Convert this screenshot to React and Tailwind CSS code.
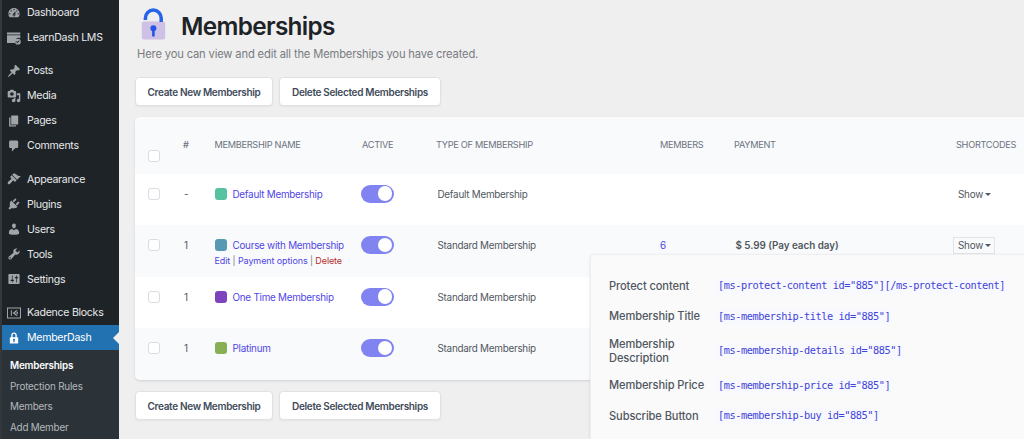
import React from "react";
import clsx from "clsx";

// --- Menu icons, 20x20 grid ---
const ICONS = {
  dashboard:
    "M3.76 16h12.48c1.1-1.37 1.76-3.11 1.76-5 0-4.42-3.58-8-8-8s-8 3.58-8 8c0 1.89.66 3.63 1.76 5zM10 4c.55 0 1 .45 1 1s-.45 1-1 1-1-.45-1-1 .45-1 1-1zM6 6c.55 0 1 .45 1 1s-.45 1-1 1-1-.45-1-1 .45-1 1-1zm8 0c.55 0 1 .45 1 1s-.45 1-1 1-1-.45-1-1 .45-1 1-1zm-5.37 5.55L12 7v6c0 1.1-.9 2-2 2s-2-.9-2-2c0-.57.24-1.08.63-1.45zM4 10c.55 0 1 .45 1 1s-.45 1-1 1-1-.45-1-1 .45-1 1-1zm12 0c.55 0 1 .45 1 1s-.45 1-1 1-1-.45-1-1 .45-1 1-1zm-5 3c0-.55-.45-1-1-1s-1 .45-1 1 .45 1 1 1 1-.45 1-1z",
  learndash:
    "M0 2h19v3H0zM0 6h19v4.5a5 5 0 0 0-7 6.5H0zM15.5 11a4.2 4.2 0 1 0 0 8.4 4.2 4.2 0 0 0 0-8.4zm-.7 6.4l-2-2 .9-.9 1.1 1.1 2.3-2.3.9.9z",
  post: "M10.44 3.02l1.82-1.82 6.36 6.35-1.83 1.82c-1.05-.68-2.48-.57-3.41.36l-.75.75c-.92.93-1.04 2.35-.35 3.41l-1.83 1.82-2.41-2.41-2.8 2.79c-.42.42-3.38 2.71-3.8 2.29s1.86-3.39 2.28-3.81l2.79-2.79L4.1 9.36l1.83-1.82c1.05.69 2.48.57 3.4-.36l.75-.75c.93-.92 1.05-2.35.36-3.41z",
  media:
    "M13 11V4c0-.55-.45-1-1-1h-1.67L9 1H5L3.67 3H2c-.55 0-1 .45-1 1v7c0 .55.45 1 1 1h10c.55 0 1-.45 1-1zM7 4.5c1.38 0 2.5 1.12 2.5 2.5S8.38 9.5 7 9.5 4.5 8.38 4.5 7 5.62 4.5 7 4.5zM14 6h5v10.5c0 1.38-1.12 2.5-2.5 2.5S14 17.88 14 16.5s1.12-2.5 2.5-2.5c.17 0 .34.02.5.05V9h-3V6zm-4 8.05V13h2v3.5c0 1.38-1.12 2.5-2.5 2.5S7 17.88 7 16.5 8.12 14 9.5 14c.17 0 .34.02.5.05z",
  page: "M6 15V2h10v13H6zm-1 1h8v2H3V5h2v11z",
  comments:
    "M5 2h9c1.1 0 2 .9 2 2v7c0 1.1-.9 2-2 2h-2l-5 5v-5H5c-1.1 0-2-.9-2-2V4c0-1.1.9-2 2-2z",
  appearance:
    "M14.48 11.06L7.41 3.99l1.5-1.5c.5-.56 2.3-.47 3.51.32 1.21.8 1.43 1.28 2.91 2.1 1.18.64 2.45 1.26 4.45.85zm-.71.71L6.7 4.7 4.93 6.47c-.39.39-.39 1.02 0 1.41l1.06 1.06c.39.39.39 1.03 0 1.42-.6.6-1.43 1.11-2.21 1.69-.35.26-.7.53-1.01.84C1.43 14.23.4 16.08 1.4 17.07c.99 1 2.84-.03 4.18-1.36.31-.31.58-.66.85-1.02.57-.78 1.08-1.61 1.69-2.21.39-.39 1.02-.39 1.41 0l1.06 1.06c.39.39 1.02.39 1.41 0z",
  plugins:
    "M13.11 4.36L9.87 7.6 8 5.73l3.24-3.24c.35-.34 1.05-.2 1.56.32.52.51.66 1.21.31 1.55zm-8 1.77l.91-1.12 9.01 9.01-1.19.84c-.71.71-2.63 1.16-3.82 1.16H6.14L4.9 17.26c-.59.59-1.54.59-2.12 0-.59-.58-.59-1.53 0-2.12l1.24-1.24v-3.88c0-1.13.4-3.19 1.09-3.89zm7.26 3.97l3.24-3.24c.34-.35 1.04-.21 1.55.31.52.51.66 1.21.31 1.55l-3.24 3.25z",
  users:
    "M10 9.25c-2.27 0-2.73-3.44-2.73-3.44C7 4.02 7.82 2 9.97 2c2.16 0 2.98 2.02 2.71 3.81 0 0-.41 3.44-2.68 3.44zm0 2.57L12.72 10c2.39 0 4.52 2.33 4.52 4.53v2.49s-3.65 1.13-7.24 1.13c-3.65 0-7.24-1.13-7.24-1.13v-2.49c0-2.25 1.94-4.48 4.47-4.48z",
  tools:
    "M16.68 9.77c-1.34 1.34-3.3 1.67-4.95.99l-5.41 6.52c-.99.99-2.59.99-3.58 0s-.99-2.59 0-3.57l6.52-5.42c-.68-1.65-.35-3.61.99-4.95 1.28-1.28 3.12-1.62 4.72-1.06l-2.89 2.89 2.82 2.82 2.86-2.87c.53 1.58.18 3.39-1.08 4.65zM3.81 16.21c.4.39 1.04.39 1.43 0 .4-.4.4-1.04 0-1.43-.39-.4-1.03-.4-1.43 0-.39.39-.39 1.03 0 1.43z",
  settings:
    "M18 16V4c0-.55-.45-1-1-1H3c-.55 0-1 .45-1 1v12c0 .55.45 1 1 1h14c.55 0 1-.45 1-1zM8 11h1c.55 0 1 .45 1 1s-.45 1-1 1H8v1.5c0 .28-.22.5-.5.5s-.5-.22-.5-.5V13H6c-.55 0-1-.45-1-1s.45-1 1-1h1V5.5c0-.28.22-.5.5-.5s.5.22.5.5V11zm5-2h-1c-.55 0-1-.45-1-1s.45-1 1-1h1V5.5c0-.28.22-.5.5-.5s.5.22.5.5V7h1c.55 0 1 .45 1 1s-.45 1-1 1h-1v5.5c0 .28-.22.5-.5.5s-.5-.22-.5-.5V9z",
  kadence:
    "M0 2h20v16H0zM1.4 3.4v13.2h17.2V3.4zM5.5 6H7v8H5.5zM8 10l5-4h2.5l-4.2 4 4.2 4H13zM12.6 10l2.9-2.2v4.4z",
  lock: "M14 9h1c.55 0 1 .45 1 1v7c0 .55-.45 1-1 1H5c-.55 0-1-.45-1-1v-7c0-.55.45-1 1-1h1V6c0-2.21 1.79-4 4-4s4 1.79 4 4v3zm-2 0V6c0-1.1-.9-2-2-2s-2 .9-2 2v3h4zm-1 7l-.36-2.15c.51-.24.86-.75.86-1.35 0-.83-.67-1.5-1.5-1.5s-1.5.67-1.5 1.5c0 .6.35 1.11.86 1.35L9 16h2z",
};

const MENU = [
  [
    { icon: "dashboard", label: "Dashboard" },
    { icon: "learndash", label: "LearnDash LMS" },
  ],
  [
    { icon: "post", label: "Posts" },
    { icon: "media", label: "Media" },
    { icon: "page", label: "Pages" },
    { icon: "comments", label: "Comments" },
  ],
  [
    { icon: "appearance", label: "Appearance" },
    { icon: "plugins", label: "Plugins" },
    { icon: "users", label: "Users" },
    { icon: "tools", label: "Tools" },
    { icon: "settings", label: "Settings" },
  ],
  [
    { icon: "kadence", label: "Kadence Blocks" },
    { icon: "lock", label: "MemberDash", active: true },
  ],
];

const SUBMENU = ["Memberships", "Protection Rules", "Members", "Add Member"];

const ROWS = [
  { num: "-", color: "bg-[#57c2a0]", name: "Default Membership", type: "Default Membership", show: true },
  {
    num: "1",
    color: "bg-[#5799b4]",
    name: "Course with Membership",
    type: "Standard Membership",
    members: "6",
    payment: "$ 5.99 (Pay each day)",
    show: true,
    open: true,
  },
  { num: "1", color: "bg-[#7d44bd]", name: "One Time Membership", type: "Standard Membership" },
  { num: "1", color: "bg-[#87b054]", name: "Platinum", type: "Standard Membership" },
];

const SHORTCODES = [
  { label: "Protect content", code: '[ms-protect-content id="885"][/ms-protect-content]' },
  { label: "Membership Title", code: '[ms-membership-title id="885"]' },
  { label: "Membership Description", code: '[ms-membership-details id="885"]', tall: true },
  { label: "Membership Price", code: '[ms-membership-price id="885"]' },
  { label: "Subscribe Button", code: '[ms-membership-buy id="885"]' },
];

const COLS = "grid grid-cols-[35px_31px_147px_75px_224px_74px_220px_1fr] pl-[13px]";

// --- Sidebar ---
const MenuItem = ({ icon, label, active }) => (
  <li
    className={clsx(
      "relative flex h-[25px] items-center gap-[6px] pl-[5px]",
      active ? "bg-[#2271b1] text-white" : "text-[#e8e9ea]"
    )}
  >
    <svg viewBox="0 0 20 20" className={clsx("size-[14px] shrink-0", active ? "fill-white" : "fill-[#a0a5aa]")}>
      <path fillRule="evenodd" d={ICONS[icon]} />
    </svg>
    <span className="pt-[0.6px] text-[10.6px] tracking-[-0.29px] whitespace-nowrap">{label}</span>
    {active && (
      <span className="absolute top-[7px] right-0 border-y-[6px] border-r-[6px] border-y-transparent border-r-[#efefef]"></span>
    )}
  </li>
);

const Sidebar = () => (
  <aside className="flex w-[119px] shrink-0 flex-col border-l-2 border-[#33383d] bg-[#1d2327]">
    <nav className="flex flex-col gap-[8.4px]">
      {MENU.map((group, i) => (
        <ul key={i}>
          {group.map((item) => (
            <MenuItem key={item.label} {...item} />
          ))}
        </ul>
      ))}
    </nav>
    <ul className="flex-1 bg-[#2c3338] pt-[4.8px] pl-2 text-[9.9px] tracking-[-0.21px]">
      {SUBMENU.map((label, i) => (
        <li
          key={label}
          className={clsx("flex h-[20.7px] items-center", i === 0 ? "font-semibold text-white" : "text-[#b4b9be]")}
        >
          {label}
        </li>
      ))}
    </ul>
  </aside>
);

// --- Page pieces ---
const PadlockLogo = () => (
  <svg viewBox="0 0 26 34" className="mb-[1px] h-[34px] w-[26px]">
    <rect x="0.8" y="13.6" width="23.4" height="18" rx="2" fill="#cfc0e6" />
    <path d="M4.4 12V10a7.9 7.9 0 0 1 15.8 0v4" fill="none" stroke="#2563eb" strokeWidth="3.5" />
    <circle cx="12.4" cy="20.3" r="3" fill="#2456e6" />
    <path d="M12.4 21v6.4" stroke="#2456e6" strokeWidth="2.6" strokeLinecap="round" />
  </svg>
);

const Button = ({ children, className }) => (
  <button
    className={clsx(
      "flex h-[29px] items-center justify-center rounded-[4px] border border-[#dfe1e5] bg-white pt-[1px] text-[10px] font-semibold tracking-[-0.32px] whitespace-nowrap text-[#414b5a] shadow-xs",
      className
    )}
  >
    {children}
  </button>
);

const Actions = () => (
  <div className="flex gap-[6px]">
    <Button className="w-[138px]">Create New Membership</Button>
    <Button className="w-[162px]">Delete Selected Memberships</Button>
  </div>
);

const Checkbox = () => <span className="block size-[12px] rounded-[3px] border border-[#d9dce1] bg-white"></span>;

const Toggle = () => (
  <span className="flex h-[18px] w-[33px] items-center justify-end rounded-full bg-[#8183f1] pr-[2px]">
    <span className="size-[14.5px] rounded-full bg-white"></span>
  </span>
);

const Row = ({ num, color, name, type, members, payment, show, open, odd }) => (
  <div
    className={clsx(
      COLS,
      "h-[51.5px] pt-[10px] text-[9.9px] tracking-[-0.26px] text-[#50575e]",
      odd ? "bg-[#f9fafb]" : "bg-white"
    )}
  >
    <div className="flex h-5 items-center">
      <Checkbox />
    </div>
    <div className="flex h-5 items-center pt-[1px] pl-[1px]">{num}</div>
    <div>
      <div className="flex h-5 items-center gap-[6px] pl-[0.5px] whitespace-nowrap text-[#4f46e5]">
        <span className={clsx("size-[12px] rounded-[3px]", color)}></span>
        <span className="pt-[1px]">{name}</span>
      </div>
      {open && (
        <div className="mt-[-1px] pl-[0.5px] text-[9px] leading-[14px] tracking-[-0.1px] whitespace-nowrap text-[#777]">
          <span className="text-[#4f46e5]">Edit</span> | <span className="text-[#4f46e5]">Payment options</span> |{" "}
          <span className="text-[#b32d2e]">Delete</span>
        </div>
      )}
    </div>
    <div className="flex h-5 items-center">
      <Toggle />
    </div>
    <div className="flex h-5 items-center pt-[1px] pl-[1.5px]">{type}</div>
    <div className="flex h-5 items-center pt-[1px] text-[#4f46e5]">{members}</div>
    <div className="flex h-5 items-center pt-[1px] pl-[1.5px] font-semibold tracking-[-0.04px]">{payment}</div>
    <div className="flex h-5 items-center">
      {show && (
        <span
          className={clsx(
            "mt-[1px] ml-[-1px] flex h-[17px] w-[42px] items-center gap-[2px] border pl-[4px]",
            open ? "border-[#e2e4e8]" : "border-transparent"
          )}
        >
          Show
          <span className="border-x-[3px] border-t-[3.5px] border-x-transparent border-t-[#50575e]"></span>
        </span>
      )}
    </div>
  </div>
);

const MembershipTable = () => (
  <div className="w-[920px] overflow-hidden rounded-[5px] bg-white shadow-sm">
    <div
      className={clsx(
        COLS,
        "h-[56.5px] bg-[#f9fafb] pt-[21px] text-[9.2px] leading-[14px] tracking-[-0.29px] text-[#6b7280]"
      )}
    >
      <div className="pt-[12px]">
        <Checkbox />
      </div>
      <div className="font-medium">#</div>
      <div className="pl-[0.5px]">MEMBERSHIP NAME</div>
      <div className="pl-[1px]">ACTIVE</div>
      <div>TYPE OF MEMBERSHIP</div>
      <div>MEMBERS</div>
      <div>PAYMENT</div>
      <div className="pl-[2px]">SHORTCODES</div>
    </div>
    {ROWS.map((row, i) => (
      <Row key={row.name} {...row} odd={i % 2 === 1} />
    ))}
  </div>
);

const ShortcodePopup = () => (
  <div className="absolute top-[254px] left-[590px] flex h-[200px] w-[450px] flex-col rounded-[4px] border border-[#eeeff1] bg-[#fafafb] pt-[16px] pl-[18px] shadow-sm">
    {SHORTCODES.map(({ label, code, tall }) => (
      <div key={label} className={clsx("flex items-center", tall ? "h-[39px]" : "h-[30.3px]")}>
        <span className="w-[107px] pr-[8px] text-[11.1px] leading-[14.5px] font-medium tracking-[-0.1px] text-[#50575e]">
          {label}
        </span>
        <code className="bg-[#f8f9ff] px-[2px] font-['DejaVu_Sans_Mono',monospace] text-[10.3px] tracking-[-0.46px] whitespace-nowrap text-[#4143d8]">
          {code}
        </code>
      </div>
    ))}
  </div>
);

function App() {
  return (
    <div className="relative flex h-[439px] w-[1024px] overflow-hidden bg-[#efefef] font-['Inter',sans-serif]">
      <Sidebar />
      <main className="min-w-0 flex-1 pl-4">
        <header>
          <div className="flex h-[43px] items-end gap-[14px] pl-[6px]">
            <PadlockLogo />
            <h1 className="text-[24.3px] leading-[34px] font-semibold tracking-[-0.65px] text-[#1d2327]">Memberships</h1>
          </div>
          <p className="mt-[3px] pl-[2px] text-[11.2px] leading-4 tracking-[-0.16px] text-[#787c82]">
            Here you can view and edit all the Memberships you have created.
          </p>
        </header>
        <div className="mt-[15px]">
          <Actions />
        </div>
        <div className="mt-[11px] mb-[11.5px]">
          <MembershipTable />
        </div>
        <Actions />
      </main>
      <ShortcodePopup />
    </div>
  );
}

export default App;
